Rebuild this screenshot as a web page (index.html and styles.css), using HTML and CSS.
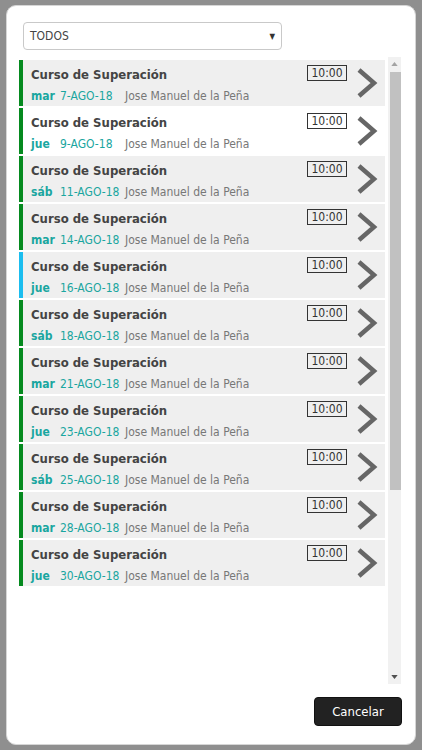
FILE: index.html
```html
<!DOCTYPE html>
<html lang="es">
<head>
<meta charset="utf-8">
<title>Cursos</title>
<link rel="stylesheet" href="styles.css">
</head>
<body>
<div class="dialog">
  <div class="select">
    <span class="select-text">TODOS</span>
    <span class="select-arrow">&#9660;</span>
  </div>
  <div class="list-wrap">
    <div class="list">
      <div class="row"><div class="info"><div class="title">Curso de Superación</div><div class="meta"><span class="day">mar</span><span class="date">7-AGO-18</span><span class="name">Jose Manuel de la Peña</span></div></div><span class="time">10:00</span><svg class="chev" viewBox="0 0 22 32"><path d="M3 3 L18 16 L3 29" /></svg></div>
      <div class="row white"><div class="info"><div class="title">Curso de Superación</div><div class="meta"><span class="day">jue</span><span class="date">9-AGO-18</span><span class="name">Jose Manuel de la Peña</span></div></div><span class="time">10:00</span><svg class="chev" viewBox="0 0 22 32"><path d="M3 3 L18 16 L3 29" /></svg></div>
      <div class="row"><div class="info"><div class="title">Curso de Superación</div><div class="meta"><span class="day">sáb</span><span class="date">11-AGO-18</span><span class="name">Jose Manuel de la Peña</span></div></div><span class="time">10:00</span><svg class="chev" viewBox="0 0 22 32"><path d="M3 3 L18 16 L3 29" /></svg></div>
      <div class="row"><div class="info"><div class="title">Curso de Superación</div><div class="meta"><span class="day">mar</span><span class="date">14-AGO-18</span><span class="name">Jose Manuel de la Peña</span></div></div><span class="time">10:00</span><svg class="chev" viewBox="0 0 22 32"><path d="M3 3 L18 16 L3 29" /></svg></div>
      <div class="row blue"><div class="info"><div class="title">Curso de Superación</div><div class="meta"><span class="day">jue</span><span class="date">16-AGO-18</span><span class="name">Jose Manuel de la Peña</span></div></div><span class="time">10:00</span><svg class="chev" viewBox="0 0 22 32"><path d="M3 3 L18 16 L3 29" /></svg></div>
      <div class="row"><div class="info"><div class="title">Curso de Superación</div><div class="meta"><span class="day">sáb</span><span class="date">18-AGO-18</span><span class="name">Jose Manuel de la Peña</span></div></div><span class="time">10:00</span><svg class="chev" viewBox="0 0 22 32"><path d="M3 3 L18 16 L3 29" /></svg></div>
      <div class="row"><div class="info"><div class="title">Curso de Superación</div><div class="meta"><span class="day">mar</span><span class="date">21-AGO-18</span><span class="name">Jose Manuel de la Peña</span></div></div><span class="time">10:00</span><svg class="chev" viewBox="0 0 22 32"><path d="M3 3 L18 16 L3 29" /></svg></div>
      <div class="row"><div class="info"><div class="title">Curso de Superación</div><div class="meta"><span class="day">jue</span><span class="date">23-AGO-18</span><span class="name">Jose Manuel de la Peña</span></div></div><span class="time">10:00</span><svg class="chev" viewBox="0 0 22 32"><path d="M3 3 L18 16 L3 29" /></svg></div>
      <div class="row"><div class="info"><div class="title">Curso de Superación</div><div class="meta"><span class="day">sáb</span><span class="date">25-AGO-18</span><span class="name">Jose Manuel de la Peña</span></div></div><span class="time">10:00</span><svg class="chev" viewBox="0 0 22 32"><path d="M3 3 L18 16 L3 29" /></svg></div>
      <div class="row"><div class="info"><div class="title">Curso de Superación</div><div class="meta"><span class="day">mar</span><span class="date">28-AGO-18</span><span class="name">Jose Manuel de la Peña</span></div></div><span class="time">10:00</span><svg class="chev" viewBox="0 0 22 32"><path d="M3 3 L18 16 L3 29" /></svg></div>
      <div class="row"><div class="info"><div class="title">Curso de Superación</div><div class="meta"><span class="day">jue</span><span class="date">30-AGO-18</span><span class="name">Jose Manuel de la Peña</span></div></div><span class="time">10:00</span><svg class="chev" viewBox="0 0 22 32"><path d="M3 3 L18 16 L3 29" /></svg></div>
    </div>
    <div class="scrollbar">
      <div class="sb-btn"><svg viewBox="0 0 8 5"><path d="M0 5 L4 0 L8 5 Z" /></svg></div>
      <div class="sb-track"><div class="sb-thumb"></div></div>
      <div class="sb-btn"><svg viewBox="0 0 8 5"><path d="M0 0 L8 0 L4 5 Z" /></svg></div>
    </div>
  </div>
  <div class="footer">
    <button class="btn-cancel">Cancelar</button>
  </div>
</div>
</body>
</html>
```
FILE: styles.css
```css
html, body {
  margin: 0;
  padding: 0;
}
body {
  background: #8f8f8f;
  width: 422px;
  height: 750px;
  overflow: hidden;
  font-family: "DejaVu Sans Condensed", "DejaVu Sans", sans-serif;
}
.dialog {
  box-sizing: border-box;
  margin: 5px 6px 0 6px;
  width: 410px;
  height: 740px;
  background: #ffffff;
  border: 1px solid #d6d6d6;
  border-radius: 10px;
  display: flex;
  flex-direction: column;
  padding: 16px 13px 0 12px;
}
.select {
  box-sizing: border-box;
  margin-left: 4px;
  width: 259px;
  height: 28px;
  border: 1px solid #c9c9c9;
  border-radius: 4px;
  display: flex;
  align-items: center;
  justify-content: space-between;
  padding: 0 6px 0 6px;
  color: #444;
  font-size: 12px;
}
.select-arrow {
  font-size: 8px;
  color: #333;
}
.list-wrap {
  display: flex;
  margin-top: 7px;
  height: 627px;
  gap: 3px;
}
.list {
  width: 366px;
  padding-top: 3px;
  display: flex;
  flex-direction: column;
  gap: 2px;
}
.row {
  box-sizing: border-box;
  height: 46px;
  background: #efefef;
  border-left: 4px solid #058a1f;
  display: flex;
  align-items: flex-start;
  padding-left: 8px;
}
.row.white {
  background: #ffffff;
}
.row.blue {
  border-left-color: #1bbdef;
}
.info {
  flex: 1;
  padding-top: 7px;
}
.title {
  font-weight: bold;
  font-size: 13px;
  color: #444;
  line-height: 16px;
}
.meta {
  font-size: 12px;
  line-height: 16px;
  margin-top: 5px;
  display: flex;
  white-space: nowrap;
}
.day {
  width: 29px;
  font-weight: bold;
  color: #1aa6a0;
}
.date {
  width: 65px;
  color: #1aa6a0;
}
.name {
  color: #777;
}
.time {
  box-sizing: border-box;
  margin-top: 5px;
  border: 1px solid #333;
  font-size: 12px;
  line-height: 14px;
  padding: 0 2px;
  color: #333;
  width: 40px;
  text-align: center;
}
.chev {
  width: 22px;
  height: 32px;
  margin: 7px 7px 0 9px;
  fill: none;
  stroke: #666;
  stroke-width: 4.5;
}
.scrollbar {
  width: 13px;
  background: #f1f1f1;
  display: flex;
  flex-direction: column;
}
.sb-btn {
  height: 14px;
  display: flex;
  align-items: center;
  justify-content: center;
}
.sb-btn svg {
  width: 7px;
  height: 4px;
  fill: #505050;
}
.sb-btn:first-child svg {
  fill: #a3a3a3;
}
.sb-track {
  flex: 1;
  display: flex;
  flex-direction: column;
}
.sb-thumb {
  margin: 1px 0 0 2px;
  height: 418px;
  background: #c1c1c1;
}
.footer {
  display: flex;
  justify-content: flex-end;
  margin-top: 13px;
}
.btn-cancel {
  width: 88px;
  height: 29px;
  background: #222222;
  color: #ffffff;
  border: 1px solid #111;
  border-radius: 4px;
  font-family: "DejaVu Sans Condensed", "DejaVu Sans", sans-serif;
  font-size: 13px;
  padding: 0;
}
```
